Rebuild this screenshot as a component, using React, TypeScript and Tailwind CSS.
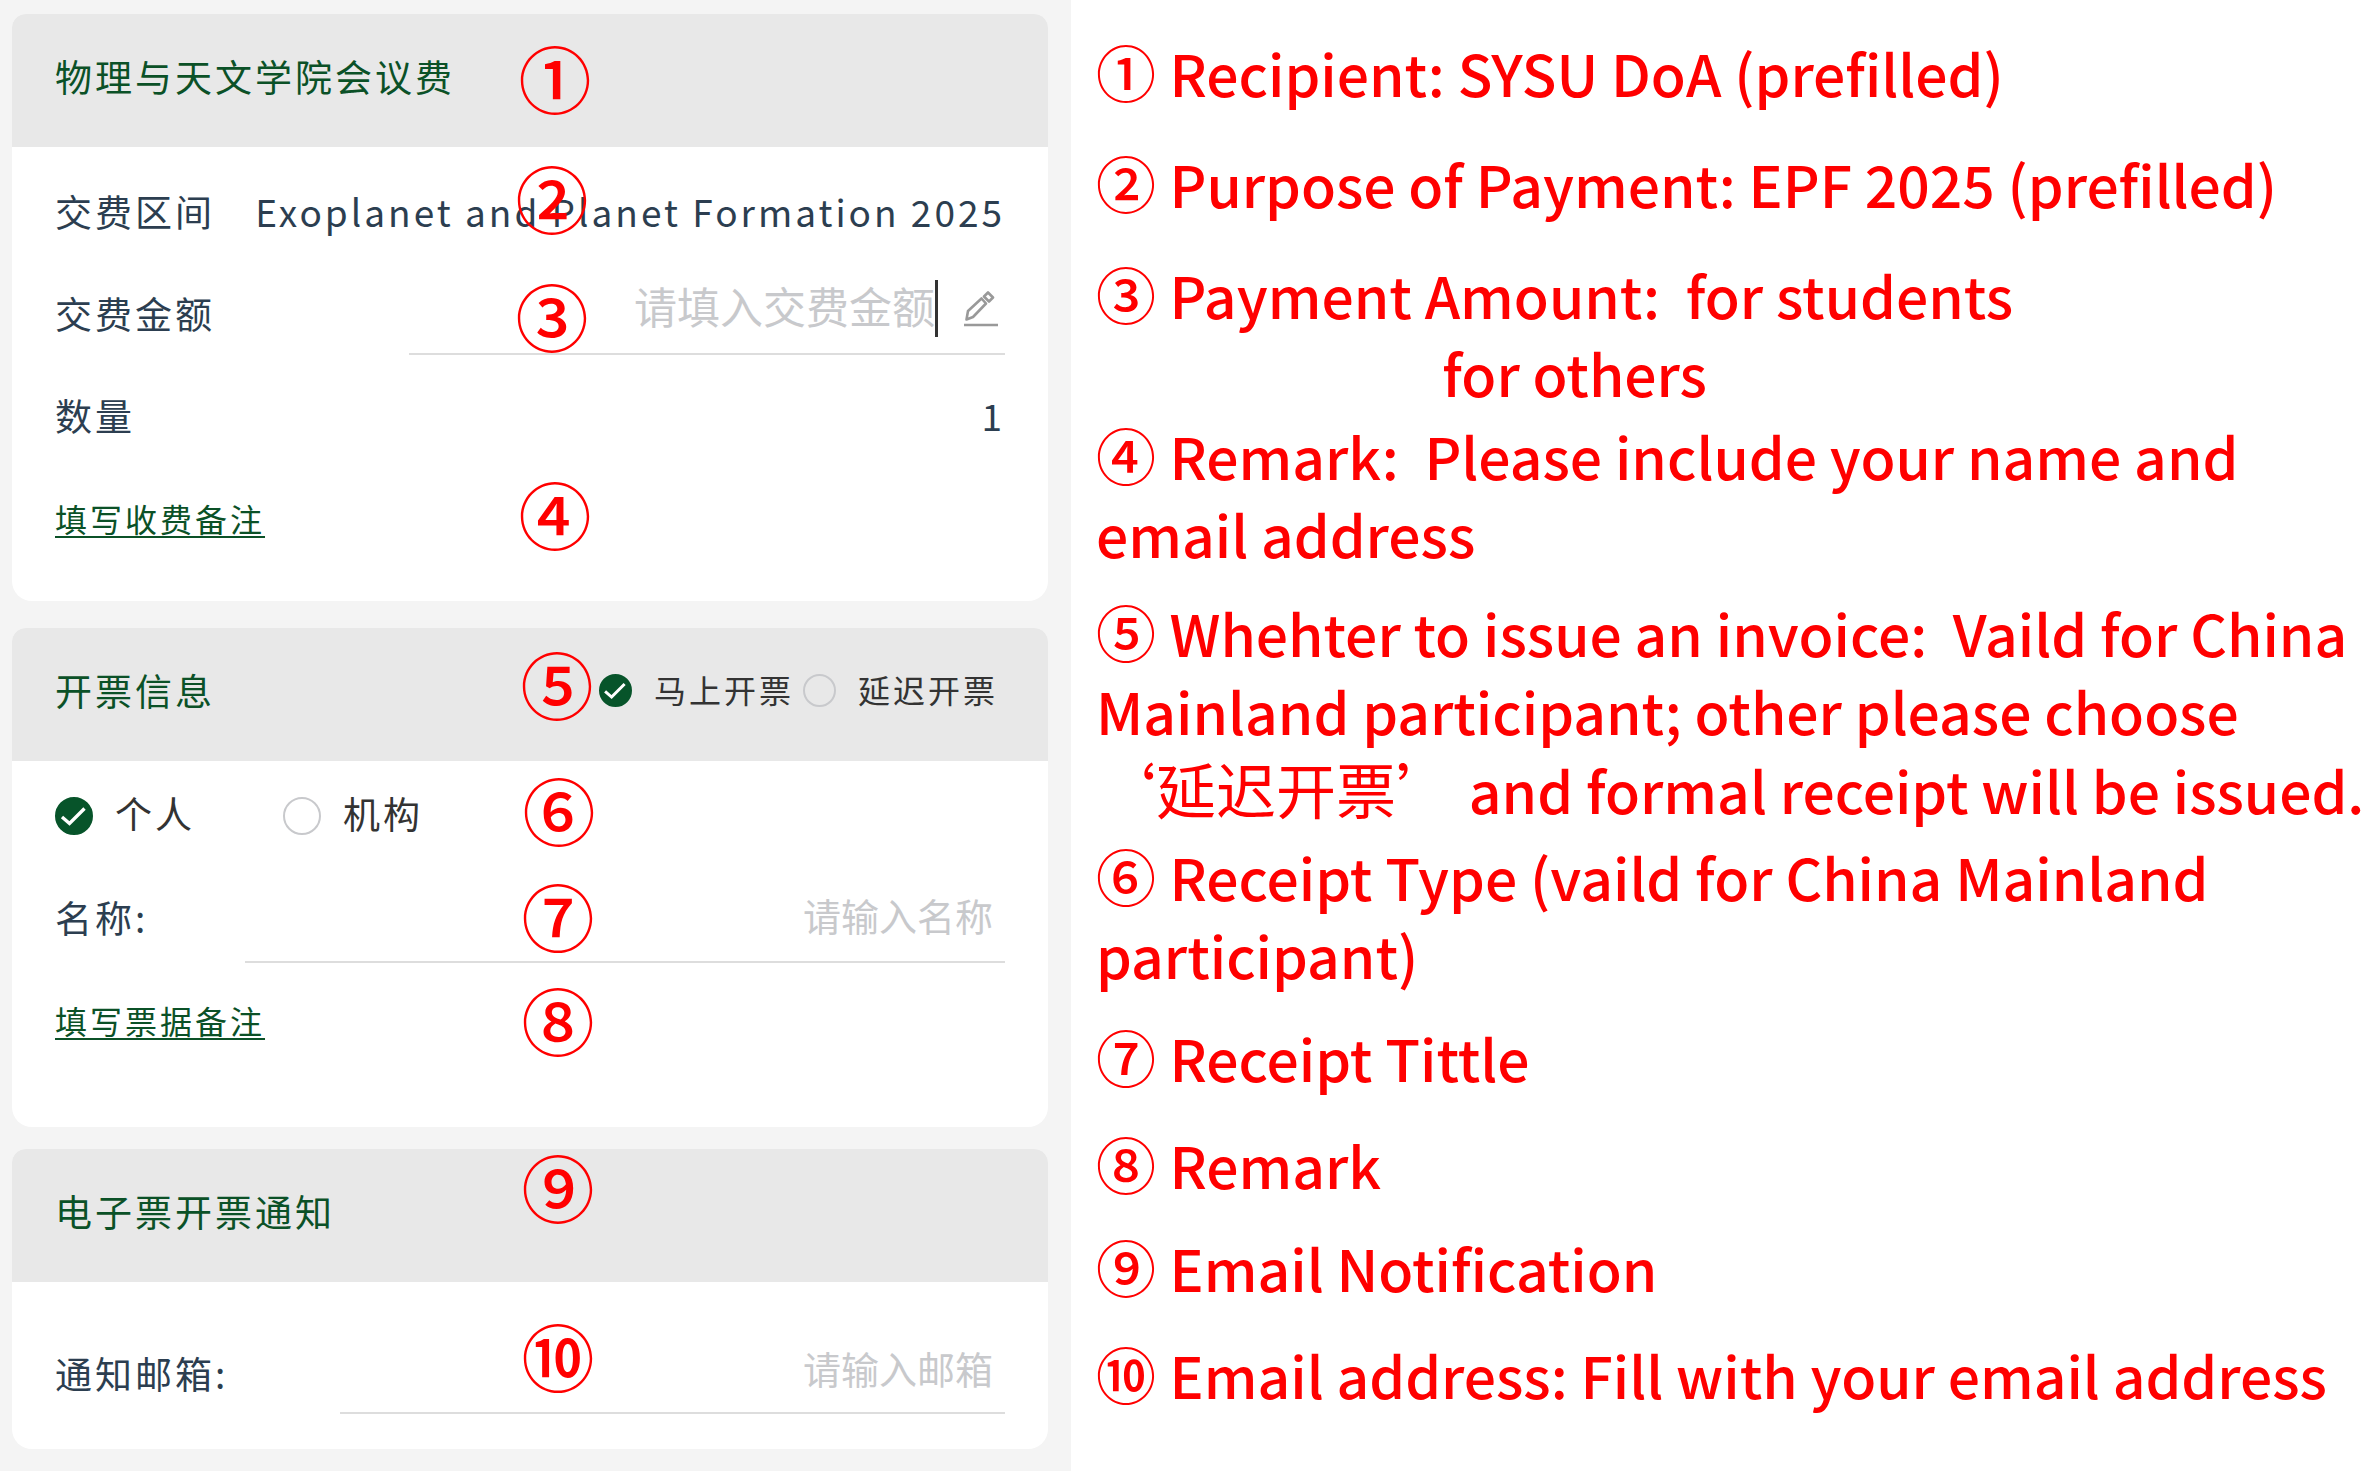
import { useState } from "react";
import type { ReactNode } from "react";

function Badge({ mark, className }: { mark: string; className: string }) {
  return (
    <span
      className={
        "pointer-events-none absolute flex size-[68px] items-center justify-center pb-2 text-[73px] leading-none font-medium tracking-normal text-[#ff0000] " +
        className
      }
    >
      {mark}
    </span>
  );
}

function Card({ title, badge, extra, children }: { title: string; badge: ReactNode; extra?: ReactNode; children: ReactNode }) {
  return (
    <section className="rounded-t-[14px] rounded-b-[20px] bg-white">
      <header className="relative flex h-[133px] items-center justify-between rounded-t-[14px] bg-[#e8e8e8] pr-[50px] pb-2 pl-[43px]">
        <h2 className="text-[37px] text-[#0b5127]">{title}</h2>
        {extra}
        {badge}
      </header>
      {children}
    </section>
  );
}

function Row({ children }: { children: ReactNode }) {
  return <div className="relative flex h-[102px] items-center justify-between pb-0.5">{children}</div>;
}

function Radio({
  name,
  label,
  checked,
  onSelect,
  small,
}: {
  name: string;
  label: string;
  checked: boolean;
  onSelect: () => void;
  small?: boolean;
}) {
  return (
    <label
      className={
        small
          ? "flex items-center gap-[22px] text-[32px] text-[#333333]"
          : "flex items-center gap-[22px] text-[37px] text-[#333333]"
      }
    >
      <span className={small ? "relative size-[33px]" : "relative size-[38px]"}>
        <input
          type="radio"
          name={name}
          checked={checked}
          onChange={onSelect}
          className="block size-full appearance-none rounded-full border-2 border-[#c8c9cc] checked:border-[#07542a] checked:bg-[#07542a]"
        />
        {checked && (
          <svg viewBox="0 0 38 38" className="pointer-events-none absolute inset-0 size-full" fill="none" stroke="#fff" strokeWidth="3.400">
            <path d="M7 20 L14.500 26.500 L29.500 11.500" />
          </svg>
        )}
      </span>
      <span className="pb-1">{label}</span>
    </label>
  );
}

function PencilIcon() {
  return (
    <svg viewBox="0 0 34 36" className="h-9 w-[34px] shrink-0" fill="none" stroke="#999" strokeWidth="2.600" strokeLinejoin="round">
      <path d="M2.500 28.500 L4 20 L17.500 7.500 L22 12.500 L9 26 Z" />
      <path d="M20 5.500 L24 1.500 L29 6.500 L25 10.500 Z" />
      <path d="M0 34 H34" />
    </svg>
  );
}

function Note({ className, mark, lines }: { className: string; mark: string; lines: ReactNode[] }) {
  return (
    <li className={className}>
      {lines.map((line, i) => (
        <span key={i} className="block whitespace-pre">
          {i === 0 && <span className="text-[60px]">{mark} </span>}
          {line}
        </span>
      ))}
    </li>
  );
}

export default function App() {
  const [timing, setTiming] = useState("now");
  const [kind, setKind] = useState("person");

  return (
    <div className="flex min-h-screen bg-white font-['Noto_Sans_CJK_SC',sans-serif]">
      <main className="flex w-[45%] shrink-0 flex-col bg-[#f4f4f4] pt-[14px] pr-[23px] pb-[22px] pl-3 tracking-[3px] text-[#2c3e50]">
        <Card title="物理与天文学院会议费" badge={<Badge mark="①" className="top-8 left-[509px]" />}>
          <div className="px-[43px] pt-[15px] pb-[31px] text-[37px]">
            <Row>
              <span>交费区间</span>
              <span>Exoplanet and Planet Formation 2025</span>
              <Badge mark="②" className="top-1 left-[463px]" />
            </Row>
            <Row>
              <label htmlFor="amount">交费金额</label>
              <div className="flex h-[91px] w-[596px] items-center self-start border-b-2 border-[#dddddd]">
                <input
                  id="amount"
                  placeholder="请填入交费金额"
                  className="min-w-0 flex-1 pb-1.5 text-right text-[43px] tracking-normal outline-none placeholder:text-[#c8c9cc]"
                />
                <span className="mr-[26px] h-[57px] w-[3px] bg-[#333333]" />
                <button type="button" aria-label="编辑" className="mr-[7px]">
                  <PencilIcon />
                </button>
              </div>
              <Badge mark="③" className="top-5 left-[463px]" />
            </Row>
            <Row>
              <span>数量</span>
              <span>1</span>
            </Row>
            <Row>
              <a href="#fee-remark" className="text-[32px] text-[#0b5127] underline decoration-2 underline-offset-4">
                填写收费备注
              </a>
              <Badge mark="④" className="top-3.5 left-[466px]" />
            </Row>
          </div>
        </Card>

        <div className="mt-[27px]">
          <Card
            title="开票信息"
            badge={<Badge mark="⑤" className="top-6 left-[511px]" />}
            extra={
              <div className="flex gap-[9px]">
                <Radio small name="timing" label="马上开票" checked={timing === "now"} onSelect={() => setTiming("now")} />
                <Radio small name="timing" label="延迟开票" checked={timing === "later"} onSelect={() => setTiming("later")} />
              </div>
            }
          >
            <div className="px-[43px] pt-[5px] pb-[55px] text-[37px]">
              <Row>
                <div className="flex gap-[88px]">
                  <Radio name="kind" label="个人" checked={kind === "person"} onSelect={() => setKind("person")} />
                  <Radio name="kind" label="机构" checked={kind === "org"} onSelect={() => setKind("org")} />
                </div>
                <Badge mark="⑥" className="top-3 left-[470px]" />
              </Row>
              <Row>
                <label htmlFor="name">名称:</label>
                <input
                  id="name"
                  placeholder="请输入名称"
                  className="h-[95px] w-[760px] self-start border-b-2 border-[#dddddd] pr-3 text-right text-[38px] tracking-normal outline-none placeholder:text-[#c8c9cc]"
                />
                <Badge mark="⑦" className="top-4 left-[469px]" />
              </Row>
              <Row>
                <a href="#receipt-remark" className="text-[32px] text-[#0b5127] underline decoration-2 underline-offset-4">
                  填写票据备注
                </a>
                <Badge mark="⑧" className="top-[18px] left-[469px]" />
              </Row>
            </div>
          </Card>
        </div>

        <div className="mt-[22px]">
          <Card title="电子票开票通知" badge={<Badge mark="⑨" className="top-1.5 left-[512px]" />}>
            <div className="relative flex h-[167px] items-center justify-between px-[43px] pb-[35px] text-[37px]">
              <label htmlFor="email" className="pt-[52px]">
                通知邮箱:
              </label>
              <input
                id="email"
                type="email"
                placeholder="请输入邮箱"
                className="h-[92px] w-[665px] self-end border-b-2 border-[#dddddd] pr-3 text-right text-[38px] tracking-normal outline-none placeholder:text-[#c8c9cc]"
              />
              <Badge mark="⑩" className="top-[42px] left-[512px]" />
            </div>
          </Card>
        </div>
      </main>

      <ol className="min-w-0 flex-1 pt-8 pl-[25px] text-[57px] leading-[78px] font-medium text-[#ff0000]">
        <Note className="" mark="①" lines={["Recipient: SYSU DoA (prefilled)"]} />
        <Note className="mt-8" mark="②" lines={["Purpose of Payment: EPF 2025 (prefilled)"]} />
        <Note className="mt-8" mark="③" lines={["Payment Amount:  for students", "                           for others"]} />
        <Note className="mt-1" mark="④" lines={["Remark:  Please include your name and", "email address"]} />
        <Note
          className="mt-5"
          mark="⑤"
          lines={[
            "Whehter to issue an invoice:  Vaild for China",
            "Mainland participant; other please choose",
            <>
              <span className="text-[60px] font-normal">‘延迟开票’</span> and formal receipt will be issued.
            </>,
          ]}
        />
        <Note className="mt-2" mark="⑥" lines={["Receipt Type (vaild for China Mainland", "participant)"]} />
        <Note className="mt-6" mark="⑦" lines={["Receipt Tittle"]} />
        <Note className="mt-7" mark="⑧" lines={["Remark"]} />
        <Note className="mt-6" mark="⑨" lines={["Email Notification"]} />
        <Note className="mt-7" mark="⑩" lines={["Email address: Fill with your email address"]} />
      </ol>
    </div>
  );
}
